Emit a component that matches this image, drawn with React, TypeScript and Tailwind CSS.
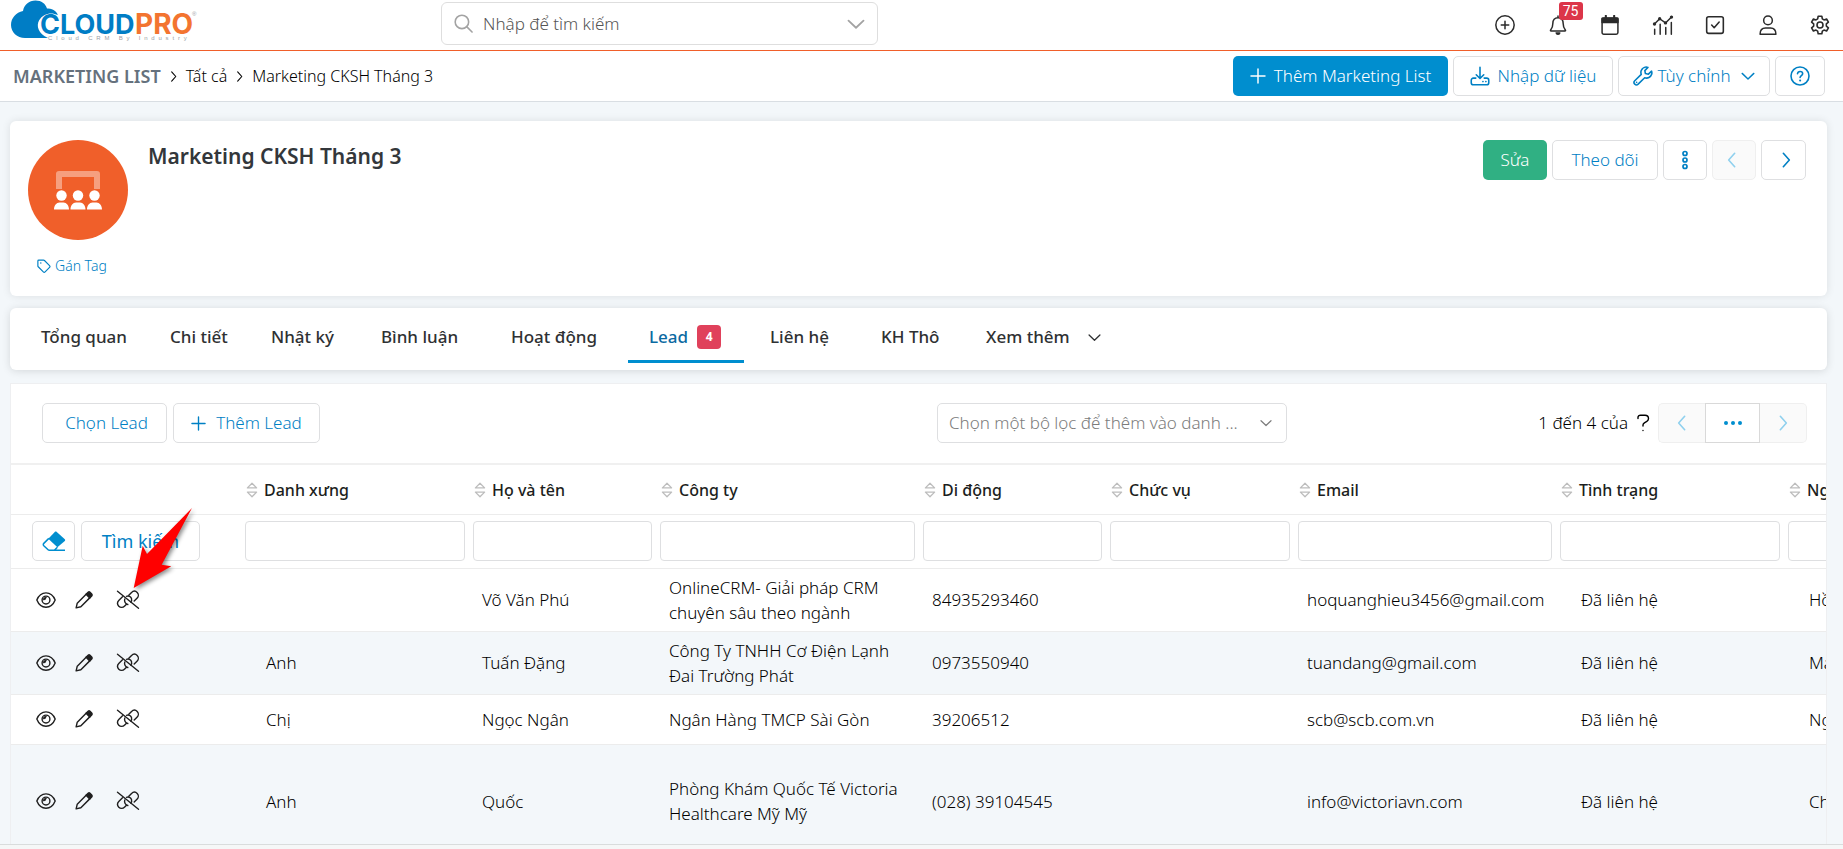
import type { ReactNode } from 'react';

type IconProps = { className?: string };

function Icon({ className = 'size-5', sw = 1.5, box = 24, children }: IconProps & { sw?: number; box?: number; children: ReactNode }) {
  return (
    <svg viewBox={`0 0 ${box} ${box}`} className={className} fill="none" stroke="currentColor" strokeWidth={sw} strokeLinecap="round" strokeLinejoin="round" aria-hidden="true">
      {children}
    </svg>
  );
}

const ChevronDown = ({ className }: IconProps) => (
  <Icon className={className} sw={2.400}><path d="M2 7.500l10 9.500 10-9.500" /></Icon>
);
const ChevronRight = ({ className }: IconProps) => (
  <Icon className={className} sw={2.400}><path d="M8 2l9 10-9 10" /></Icon>
);
const ChevronLeft = ({ className }: IconProps) => (
  <Icon className={className} sw={2.400}><path d="M16 2l-9 10 9 10" /></Icon>
);
const PlusIcon = ({ className }: IconProps) => (
  <Icon className={className} sw={2.200}><path d="M12 1.500v21M1.500 12h21" /></Icon>
);
const SearchIcon = ({ className }: IconProps) => (
  <Icon className={className} sw={2}><circle cx="10" cy="10" r="8.500" /><path d="M16 16l6.800 6.800" /></Icon>
);
const PlusCircle = () => (
  <Icon sw={1.800}><circle cx="12" cy="12" r="11" /><path d="M12 7.500v9M7.500 12h9" /></Icon>
);
const BellIcon = () => (
  <Icon sw={1.800}>
    <path d="M12 3.200c-4 0-6.200 3-6.200 7 0 4.500-1.300 6.300-2.600 7.800-.5.700-.2 1.300.5 1.300h16.600c.7 0 1-.6.500-1.300-1.300-1.500-2.600-3.300-2.600-7.800 0-4-2.200-7-6.200-7zM12 1.200v2" />
    <path d="M9.800 21.500h4.400c-.2 1-1 1.600-2.200 1.600s-2-.6-2.200-1.600z" fill="currentColor" />
  </Icon>
);
const CalendarIcon = () => (
  <Icon sw={1.800}>
    <rect x="2.500" y="3.500" width="19" height="19.500" rx="2" />
    <path d="M2.500 4h19v5h-19z" fill="currentColor" />
    <path d="M7 1v3M17 1v3" strokeWidth="2.500" />
  </Icon>
);
const ChartIcon = () => (
  <Icon className="h-5 w-[22px]" sw={1.800}>
    <path d="M1.500 11L8 4.500l7 5L22.500 2" />
    <g fill="currentColor" stroke="none"><circle cx="1.800" cy="10.800" r="2" /><circle cx="8" cy="4.500" r="2" /><circle cx="15" cy="9.500" r="2" /><circle cx="22.200" cy="2.500" r="2" /></g>
    <path d="M2 17v6M8.600 11v12M15.300 15v8M22 9v14" />
  </Icon>
);
const CheckSquare = () => (
  <Icon sw={1.900}><rect x="2" y="2" width="20" height="20" rx="2.500" /><path d="M8 12l3 3.200 6-6.700" /></Icon>
);
const UserIcon = () => (
  <Icon sw={1.800}><circle cx="12" cy="6.500" r="5.200" /><path d="M2.500 23c0-5 3-7.500 6.500-7.500h6c3.500 0 6.500 2.500 6.500 7.500z" /></Icon>
);
const GearIcon = () => (
  <Icon sw={1.900}>
    <circle cx="12" cy="12" r="3.600" />
    <path d="M9.800 1.500h4.400l.6 3.200 2 1.200 3.100-1.100 2.200 3.800-2.500 2.100v2.600l2.500 2.100-2.200 3.800-3.100-1.100-2 1.200-.6 3.200H9.800l-.6-3.200-2-1.200-3.100 1.100-2.200-3.800 2.500-2.100v-2.600L1.900 8.600l2.200-3.800 3.100 1.100 2-1.200z" />
  </Icon>
);
const ImportIcon = () => (
  <Icon sw={1.900}>
    <path d="M12 1.500v13M7.500 10.500l4.500 4.500 4.500-4.500" />
    <path d="M7 14.500H4a2.500 2.500 0 0 0-2.500 2.500v3A2.500 2.500 0 0 0 4 22.500h16a2.500 2.500 0 0 0 2.500-2.500v-3a2.500 2.500 0 0 0-2.500-2.500h-3" />
    <path d="M15.500 18.700h.1M19 18.700h.1" strokeWidth="2" />
  </Icon>
);
const WrenchIcon = () => (
  <Icon sw={1.900}>
    <path d="M22.300 6.200L18.500 9.800l-3.600-.8-.7-3.500L17.900 1.700c-3.200-1-6.700.6-8 3.700-.6 1.500-.6 3 0 4.600l-7.800 7.700a2.900 2.900 0 0 0 4.100 4.100l7.800-7.700c3.500 1.300 7.300-.6 8.400-4.100.4-1.300.3-2.600-.1-3.800z" />
    <path d="M4.300 19.600h.1" />
  </Icon>
);
const HelpIcon = () => (
  <Icon sw={1.900}>
    <circle cx="12" cy="12" r="10.800" />
    <path d="M9 9.300c.2-1.700 1.400-2.700 3.100-2.700 1.800 0 3.100 1.100 3.100 2.600 0 2.200-3.100 2.300-3.100 4.500" /><path d="M12.100 17.300h.1" strokeWidth="2.400" />
  </Icon>
);
const TagIcon = () => (
  <Icon className="size-[14px]" sw={2}>
    <path d="M1.500 3.500v8.300c0 .6.200 1.100.6 1.500l8.700 8.700c.9.900 2.200.9 3.100 0l7.600-7.600c.9-.9.900-2.200 0-3.100L12.800 2.600c-.4-.4-.9-.6-1.500-.6H3c-.8 0-1.500.7-1.500 1.500z" /><path d="M6.500 6.800h.1" strokeWidth="2.500" />
  </Icon>
);
const EyeIcon = () => (
  <Icon className="h-5 w-5" sw={1.700}>
    <path d="M1 12c2-5 6.200-8.600 11-8.600S21 7 23 12c-2 5-6.200 8.600-11 8.600S3 17 1 12z" />
    <circle cx="12" cy="12" r="4.700" /><path d="M12 9a3 3 0 0 1-3 3c-.6-1.800 1-3.600 3-3z" fill="currentColor" strokeWidth="1" />
  </Icon>
);
const PencilIcon = () => (
  <Icon className="size-[18px]" sw={1.900}>
    <path d="M1.500 22.500L3 16.200 15.500 3.700l4.800 4.800L7.800 21z" /><path d="M14.800 4.400l2.700-2.700c.7-.7 1.800-.7 2.500 0l2.300 2.300c.7.7.7 1.800 0 2.500l-2.700 2.700z" fill="currentColor" />
  </Icon>
);
const UnlinkIcon = () => (
  <svg viewBox="0 0 24 20" className="h-5 w-6" fill="none" stroke="currentColor" strokeWidth="1.400" strokeLinecap="round" strokeLinejoin="round" aria-hidden="true">
    <path d="M1.500 1.300l21 17" />
    <path d="M10.500 6.300c2.200-.9 4.300.3 5 2.300.4 1.300.1 2.600-.7 3.500" />
    <path d="M12.800 5.300l2.500-2.600c1.900-1.900 4.400-1.800 5.900-.3s1.600 4.100-.2 5.900l-2.800 2.800" />
    <path d="M6.500 6.800L3 10.300c-1.800 1.800-1.700 4.300-.2 5.900s4 1.700 5.900-.2l1.800-1.800" />
    <path d="M8.800 9c-.7 2 .2 4.700 3 5.500" />
  </svg>
);
const EraserIcon = () => (
  <svg viewBox="0 0 24 21" className="h-[21px] w-6 text-[#008ecf]" aria-hidden="true">
    <path d="M14.500.8l8.300 7.400c.5.500.5 1.200 0 1.700l-7.400 6.400L6.300 7.800 13 .8c.4-.4 1-.4 1.500 0z" fill="currentColor" />
    <path d="M6.800 7.400l-5 5c-.7.700-.7 1.600 0 2.300l4.300 4.100c.3.300.7.500 1.200.5h5l3.100-3.100M7 19.300h16" fill="none" stroke="currentColor" strokeWidth="1.500" strokeLinejoin="round" />
  </svg>
);
const SortIcon = () => (
  <svg viewBox="0 0 12 16" className="h-4 w-3 shrink-0 text-[#bdbdbd]" fill="none" stroke="currentColor" strokeWidth="1.300" strokeLinejoin="round" aria-hidden="true">
    <path d="M6 1.200l4.600 4.700H1.400zM6 14.800l4.600-4.700H1.400z" />
  </svg>
);

function Logo() {
  return (
    <svg viewBox="0 0 186 42" className="h-[42px] w-[186px]" role="img" aria-label="CloudPro">
      <path d="M37 38H14C6 38 0 32 0 25c0-7 5-12.500 12-14 1-6 6-10.500 12.500-10.500 6 0 10 3 11.500 8 3-.3 6 .5 8 2.500 1.500 1.300 2.500 2.500 2.800 4-7-3.500-15-1-18.500 5-3.500 6-1 13.500 8.700 18z" fill="#007dc5" />
      <g fontFamily="Inter, 'Liberation Sans', sans-serif" fontWeight="700">
        <text x="29" y="33.500" fontSize="27" fill="#007dc5">CLOUD</text>
        <text x="124" y="33.500" fontSize="28" fill="#f37430">PRO</text>
      </g>
      <text x="37" y="39.500" fontSize="6" letterSpacing="3.800" fill="#9aa0a6" fontFamily="'Liberation Sans', sans-serif">Cloud CRM By Industry</text>
      <text x="181" y="16" fontSize="6" fill="#9aa0a6" fontFamily="'Liberation Sans', sans-serif">®</text>
    </svg>
  );
}

const btn = 'flex h-10 items-center justify-center rounded-[5px] border border-[#dedfe1] bg-white text-[#0080c4]';
const off = 'flex h-10 items-center justify-center border border-[#efefef] bg-[#fafafa] text-[#8fd0ee]';

const topActions: { label: string; icon: ReactNode; badge?: string }[] = [
  { label: 'Tạo nhanh', icon: <PlusCircle /> },
  { label: 'Thông báo', icon: <BellIcon />, badge: '75' },
  { label: 'Lịch', icon: <CalendarIcon /> },
  { label: 'Báo cáo', icon: <ChartIcon /> },
  { label: 'Công việc', icon: <CheckSquare /> },
  { label: 'Tài khoản', icon: <UserIcon /> },
  { label: 'Cài đặt', icon: <GearIcon /> },
];

function TopBar() {
  return (
    <header className="flex h-[51px] shrink-0 items-start border-b border-[#f05f2a] bg-white pl-[11px]">
      <a href="#home" className="w-[430px] shrink-0"><Logo /></a>
      <label className="mt-0.5 flex h-[43px] w-[437px] items-center rounded-md border border-[#dedede] px-3 text-[#a3a3a3]">
        <SearchIcon className="size-[19px] shrink-0" />
        <input type="text" aria-label="Tìm kiếm" placeholder="Nhập để tìm kiếm" className="ml-[10px] min-w-0 flex-1 text-[17px] font-light outline-none placeholder:text-[#555]" />
        <ChevronDown className="size-[18px] shrink-0" />
      </label>
      <nav className="ml-auto flex h-[49px] w-[358px] items-center justify-between pr-[3px]" aria-label="Công cụ">
        {topActions.map((a) => (
          <button key={a.label} type="button" aria-label={a.label} className="relative flex h-10 w-10 items-center justify-center text-[#2b2b2b]">
            {a.icon}
            {a.badge && <span className="absolute -top-[3px] left-[21px] flex h-[18px] w-6 items-center justify-center rounded-[3px] bg-[#dc3549] font-['Roboto'] text-sm text-white">{a.badge}</span>}
          </button>
        ))}
      </nav>
    </header>
  );
}

function ModuleBar() {
  return (
    <div className="flex h-[51px] shrink-0 items-center border-b border-[#d9dee3] bg-white pr-[18px] pl-[13px]">
      <nav className="flex items-center text-base font-light text-black" aria-label="Đường dẫn">
        <a href="#list" className="text-lg leading-6 font-semibold text-[#65717d]">MARKETING LIST</a>
        <ChevronRight className="mx-[7px] size-[11px]" />
        <a href="#all">Tất cả</a>
        <ChevronRight className="mx-[7px] size-[11px]" />
        <a href="#record">Marketing CKSH Tháng 3</a>
      </nav>
      <div className="ml-auto flex gap-[5px] text-[17px] font-light">
        <button type="button" className="flex h-10 w-[215px] items-center justify-center gap-2 rounded-[5px] bg-[#008ecf] text-white"><PlusIcon className="size-4" />Thêm Marketing List</button>
        <button type="button" className={`${btn} w-40 gap-2`}><ImportIcon />Nhập dữ liệu</button>
        <button type="button" className={`${btn} w-[152px] gap-1`}><WrenchIcon />Tùy chỉnh<ChevronDown className="ml-1.5 size-[14px]" /></button>
        <button type="button" aria-label="Trợ giúp" className={`${btn} w-[50px]`}><HelpIcon /></button>
      </div>
    </div>
  );
}

function RecordHeader() {
  return (
    <section className="flex h-[175px] shrink-0 items-start rounded-md bg-white px-[18px] pt-[19px] shadow-[0_0_8px_rgba(0,0,0,0.1)]">
      <div className="w-[100px] shrink-0">
        <div className="flex size-[100px] items-center justify-center rounded-full bg-[#f05f2a]">
          <svg viewBox="0 0 50 40" className="h-10 w-[50px]" fill="#fff" aria-hidden="true">
            <path d="M3 19V4a3 3 0 0 1 3-3h38a3 3 0 0 1 3 3v15h-6V7H9v12z" opacity=".4" />
            <circle cx="8.500" cy="25.500" r="5.200" /><circle cx="25" cy="25.500" r="5.200" /><circle cx="41.500" cy="25.500" r="5.200" />
            <path d="M1 39.500c0-4 2.500-7 5.500-7h4c3 0 5.500 3 5.500 7zM17.500 39.500c0-4 2.500-7 5.500-7h4c3 0 5.500 3 5.500 7zM34 39.500c0-4 2.500-7 5.500-7h4c3 0 5.500 3 5.500 7z" />
          </svg>
        </div>
        <button type="button" className="mt-[15px] ml-[9px] flex items-center gap-1 text-sm leading-[22px] font-light text-[#0080c4]"><TagIcon />Gán Tag</button>
      </div>
      <h1 className="ml-5 text-[21px] leading-8 font-semibold text-[#33373b]">Marketing CKSH Tháng 3</h1>
      <div className="ml-auto flex gap-[5px] pr-[3px] text-[17px] font-light">
        <button type="button" className="h-10 w-16 rounded-[5px] bg-[#30b083] text-white">Sửa</button>
        <button type="button" className={`${btn} w-[106px]`}>Theo dõi</button>
        <button type="button" aria-label="Thêm thao tác" className={`${btn} w-11`}>
          <svg viewBox="0 0 6 20" className="h-5 w-1.5" fill="none" stroke="currentColor" strokeWidth="1.700" aria-hidden="true"><circle cx="3" cy="3.500" r="2" /><circle cx="3" cy="10" r="2" /><circle cx="3" cy="16.500" r="2" /></svg>
        </button>
        <button type="button" aria-label="Bản ghi trước" disabled className={`${off} w-11 rounded-[5px] pr-1`}><ChevronLeft className="size-4" /></button>
        <button type="button" aria-label="Bản ghi sau" className={`${btn} w-[45px] pl-1`}><ChevronRight className="size-4" /></button>
      </div>
    </section>
  );
}

const tabs: { label: string; width: string; badge?: number }[] = [
  { label: 'Tổng quan', width: 'w-[129px]' },
  { label: 'Chi tiết', width: 'w-[101px]' },
  { label: 'Nhật ký', width: 'w-[110px]' },
  { label: 'Bình luận', width: 'w-[130px]' },
  { label: 'Hoạt động', width: 'w-[138px]' },
  { label: 'Lead', width: 'w-[116px]', badge: 4 },
  { label: 'Liên hệ', width: 'w-[111px]' },
  { label: 'KH Thô', width: 'w-[105px]' },
];

function Tabs() {
  return (
    <nav className="flex h-[62px] shrink-0 items-end rounded-md bg-white pb-[7px] pl-[10px] shadow-[0_1px_8px_rgba(0,0,0,0.13)]" aria-label="Thẻ">
      {tabs.map((t) => (
        <a
          key={t.label}
          href="#tab"
          aria-current={t.badge ? 'page' : undefined}
          className={`flex h-[55px] items-center border-b-[3px] pt-1.5 pl-[21px] text-[17px] font-medium whitespace-nowrap ${t.width} ${t.badge ? 'mr-[5px] border-[#008ecf] text-[#0b6aa2]' : 'border-transparent text-[#2f3133]'}`}
        >
          {t.label}
          {t.badge && <span className="ml-[9px] flex size-6 items-center justify-center rounded bg-[#e0415b] text-xs font-bold text-white">{t.badge}</span>}
        </a>
      ))}
      <button type="button" className="flex h-[55px] items-center gap-[18px] border-b-[3px] border-transparent pt-1.5 pl-[21px] text-[17px] font-medium text-[#2f3133]">Xem thêm<ChevronDown className="size-[13px]" /></button>
    </nav>
  );
}

function ListToolbar() {
  return (
    <div className="flex h-[79px] items-start pt-[19px] pr-[19px] pl-[31px] text-[17px] font-light">
      <div className="flex w-[895px] shrink-0 gap-1.5">
        <button type="button" className={`${btn} w-[125px] pl-1`}>Chọn Lead</button>
        <button type="button" className={`${btn} w-[147px] gap-2.5`}><PlusIcon className="size-[15px]" />Thêm Lead</button>
      </div>
      <button type="button" aria-haspopup="listbox" className="flex h-10 w-[350px] items-center justify-between rounded-[5px] border border-[#dedfe1] px-[11px] pr-[14px] text-[#7c7c7c]">
        <span>Chọn một bộ lọc để thêm vào danh ...</span>
        <ChevronDown className="size-3" />
      </button>
      <div className="ml-auto flex items-center text-black">
        <span className="mr-[8px] flex items-center gap-2">1 đến 4 của
          <svg viewBox="0 0 14 18" className="h-[18px] w-[14px]" fill="none" stroke="currentColor" strokeWidth="1.400" strokeLinecap="round" role="img" aria-label="Tổng số"><path d="M2 4.500V3.300C2 2 3 1.200 4.500 1.200H9c2 0 3.500 1.400 3.500 3.300 0 1.300-.6 2.200-1.700 2.900L8.400 8.800C7.500 9.400 7 10 7 11v1M7 16.400v.2" /></svg>
        </span>
        <button type="button" aria-label="Trang trước" disabled className={`${off} w-[47px] rounded-l-[5px] border-r-0`}><ChevronLeft className="size-4" /></button>
        <button type="button" aria-label="Chọn trang" className="flex h-10 w-[55px] items-center justify-center gap-[3px] border border-[#d9d9d9]">
          <span className="size-1 rounded-full bg-[#008ecf]" /><span className="size-1 rounded-full bg-[#008ecf]" /><span className="size-1 rounded-full bg-[#008ecf]" />
        </button>
        <button type="button" aria-label="Trang sau" disabled className={`${off} w-[47px] rounded-r-[5px] border-l-0`}><ChevronRight className="size-4" /></button>
      </div>
    </div>
  );
}

const columns = [
  { label: 'Danh xưng', width: 'w-[228px]', wide: true },
  { label: 'Họ và tên', width: 'w-[187px]' },
  { label: 'Công ty', width: 'w-[263px]' },
  { label: 'Di động', width: 'w-[187px]' },
  { label: 'Chức vụ', width: 'w-[188px]' },
  { label: 'Email', width: 'w-[262px]' },
  { label: 'Tình trạng', width: 'w-[228px]', wide: true },
  { label: 'Người phụ trách', width: 'w-[228px]', wide: true },
];

const rows = [
  { height: 'h-[63px]', cells: ['', 'Võ Văn Phú', 'OnlineCRM- Giải pháp CRM chuyên sâu theo ngành', '84935293460', '', 'hoquanghieu3456@gmail.com', 'Đã liên hệ', 'Hồ Quang'] },
  { height: 'h-[63px]', cells: ['Anh', 'Tuấn Đặng', 'Công Ty TNHH Cơ Điện Lạnh Đai Trường Phát', '0973550940', '', 'tuandang@gmail.com', 'Đã liên hệ', 'Mai Anh'] },
  { height: 'h-[50px]', cells: ['Chị', 'Ngọc Ngân', 'Ngân Hàng TMCP Sài Gòn', '39206512', '', 'scb@scb.com.vn', 'Đã liên hệ', 'Ngọc Anh'] },
  { height: 'h-[114px]', cells: ['Anh', 'Quốc', 'Phòng Khám Quốc Tế Victoria Healthcare Mỹ Mỹ', '(028) 39104545', '', 'info@victoriavn.com', 'Đã liên hệ', 'Chi Nguyễn'] },
];

function Pointer() {
  return (
    <svg viewBox="0 0 72 92" className="pointer-events-none absolute -top-[17px] left-[49px] h-[92px] w-[72px] drop-shadow-[2px_2px_2px_rgba(0,0,0,0.45)]" aria-hidden="true">
      <path d="M62 4L31.700 60.700l9.600 1.600L3.700 84l9-42.300L17 50z" fill="#f00" />
    </svg>
  );
}

function LeadTable() {
  return (
    <table className="w-[2001px] table-fixed border-collapse text-black">
      <colgroup>
        <col className="w-[230px]" />
        {columns.map((c) => <col key={c.label} className={c.width} />)}
      </colgroup>
      <thead>
        <tr className="h-[50px] border-t-2 border-[#f0f0f0]">
          <th aria-label="Thao tác" />
          {columns.map((c) => (
            <th key={c.label} scope="col" className="pt-px pl-[5px] text-left text-base font-medium text-[#1c1e20]">
              <button type="button" className="flex items-center gap-1.5"><SortIcon />{c.label}</button>
            </th>
          ))}
        </tr>
        <tr className="h-[54px] border-y border-[#ececec]">
          <td className="pl-[21px]">
            <div className="flex gap-1.5">
              <button type="button" aria-label="Xóa bộ lọc" className={`${btn} w-[43px]`}><EraserIcon /></button>
              <div className="relative">
                <button type="button" className={`${btn} w-[119px] text-lg`}>Tìm kiếm</button>
                <Pointer />
              </div>
            </div>
          </td>
          {columns.map((c) => (
            <td key={c.label} className="px-1">
              <input type="text" aria-label={`Lọc ${c.label}`} className="block h-10 w-full rounded border border-[#dedfe1] bg-white px-2 text-base outline-none" />
            </td>
          ))}
        </tr>
      </thead>
      <tbody>
        {rows.map((r) => (
          <tr key={r.cells[1]} className={`${r.height} border-b border-[#ececec] even:bg-[#f3f7fa]`}>
            <td className="pl-[25px]">
              <div className="flex items-center text-[#1f1f1f]">
                <button type="button" aria-label="Xem"><EyeIcon /></button>
                <button type="button" aria-label="Sửa" className="ml-[19px]"><PencilIcon /></button>
                <button type="button" aria-label="Bỏ liên kết" className="ml-[23px]"><UnlinkIcon /></button>
              </div>
            </td>
            {r.cells.map((text, i) => (
              <td key={columns[i].label} className={`text-[17px] leading-[25px] font-light ${columns[i].wide ? 'pl-[25px]' : 'pr-2 pl-[13px]'}`}>{text}</td>
            ))}
          </tr>
        ))}
      </tbody>
    </table>
  );
}

export default function App() {
  return (
    <div className="flex h-screen flex-col overflow-hidden bg-[#f3f7fa] font-['Noto_Sans',sans-serif]">
      <TopBar />
      <ModuleBar />
      <main className="flex min-h-0 flex-1 flex-col gap-3 overflow-hidden pt-[19px] pr-4 pl-[10px]">
        <RecordHeader />
        <Tabs />
        <section className="mt-px min-w-0 shrink-0 overflow-hidden border border-[#eeeff1] bg-white">
          <ListToolbar />
          <LeadTable />
        </section>
      </main>
      <footer className="h-[5px] shrink-0 border-t border-[#d9dcdc] bg-[#f5f7f7]" />
    </div>
  );
}
